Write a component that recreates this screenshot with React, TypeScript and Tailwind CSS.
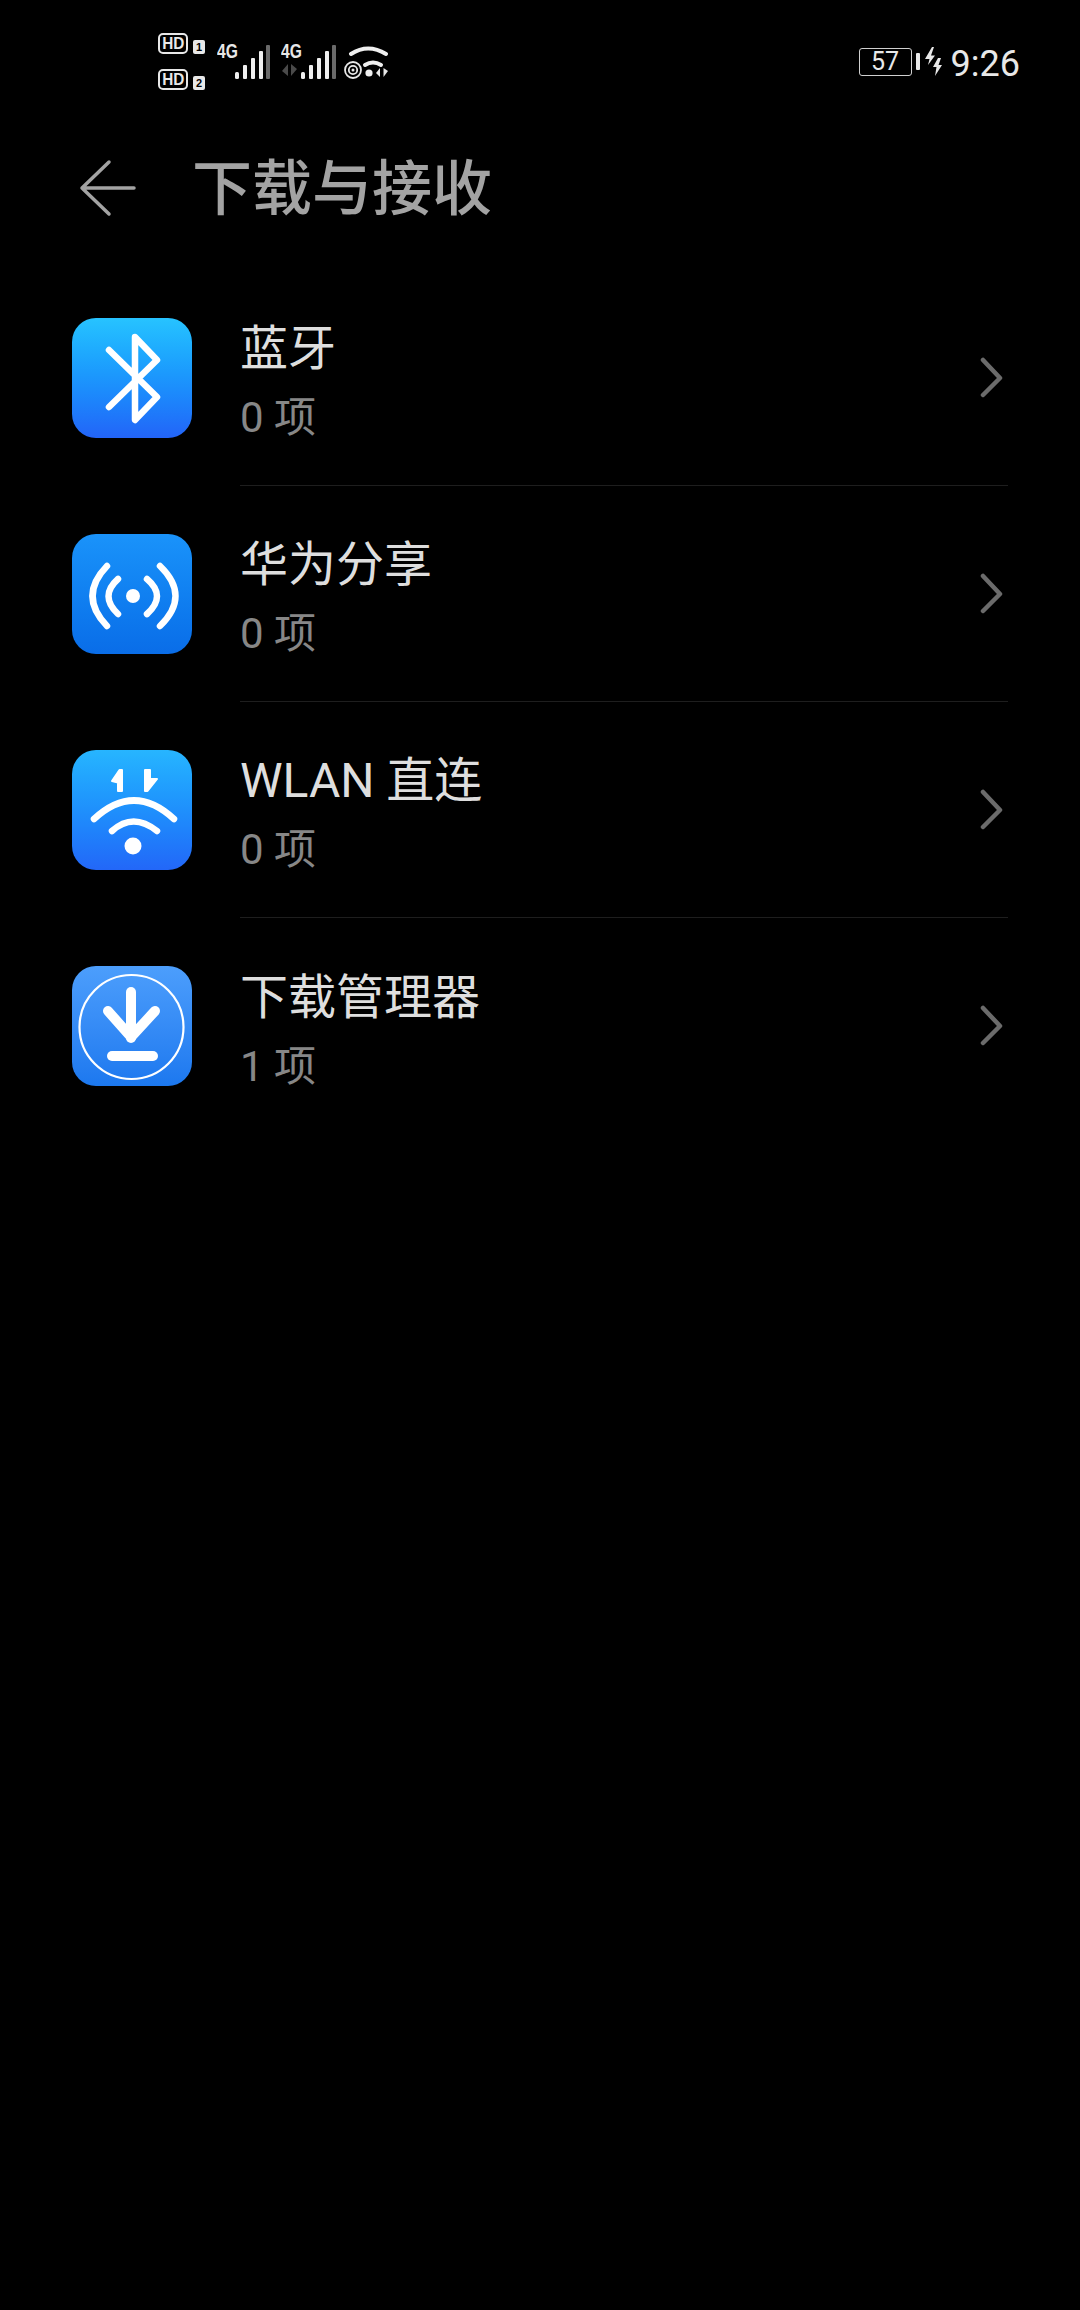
const font = "font-['Roboto','Noto_Sans_CJK_SC',sans-serif]";

function SignalBars() {
  return (
    <svg width="36" height="34" viewBox="0 0 36 34" className="block">
      <g fill="#efefef">
        <rect x="0" y="27" width="4" height="7" rx="1.5" />
        <rect x="8" y="20" width="4" height="14" rx="1" />
        <rect x="16" y="13" width="4" height="21" rx="1" />
        <rect x="24" y="6" width="4" height="28" rx="1" />
      </g>
      <rect x="31" y="0" width="4" height="34" rx="1" fill="#6a6a6a" />
    </svg>
  );
}

function HdBadge({ n }: { n: string }) {
  return (
    <div className="flex items-end gap-[5px]">
      <div className="flex h-[21px] w-[30px] items-center justify-center rounded-[5px] border-[2.5px] border-[#e8e8e8] font-['Liberation_Sans',sans-serif] text-[17px] leading-none font-bold text-[#e8e8e8]">
        <span className="scale-x-[0.9]">HD</span>
      </div>
      <div className="flex h-[14px] w-[12px] items-center justify-center rounded-[2px] bg-[#e8e8e8] font-['Liberation_Sans',sans-serif] text-[11px] leading-none font-bold text-black">
        {n}
      </div>
    </div>
  );
}

function FourG() {
  return (
    <div className="h-[15px] origin-left scale-x-[0.78] font-['Liberation_Sans',sans-serif] text-[20px] leading-[15px] font-bold text-[#e8e8e8]">
      4G
    </div>
  );
}

function Wifi() {
  return (
    <svg width="46" height="33" viewBox="0 0 46 33" fill="none" className="block">
      <path d="M7 8 Q24 -3 42 8" stroke="#efefef" strokeWidth="4" strokeLinecap="round" />
      <path d="M21 19 Q29 14 37 19" stroke="#efefef" strokeWidth="4" strokeLinecap="round" />
      <circle cx="9" cy="24" r="8" stroke="#e8e8e8" strokeWidth="1.8" />
      <circle cx="9" cy="24" r="4.2" stroke="#e8e8e8" strokeWidth="1.8" />
      <circle cx="9" cy="24" r="1.5" fill="#e8e8e8" />
      <circle cx="25" cy="27" r="3.6" fill="#efefef" />
      <path d="M36 22 V31 L32 27 Z" fill="#e8e8e8" />
      <path d="M39.5 22 V31 L44 25 Z" fill="#e8e8e8" />
    </svg>
  );
}

function StatusBar() {
  return (
    <div className="flex h-[122px] items-start pt-[33px] pr-[60px] pl-[158px]">
      <div className="flex h-[57px] w-full items-center">
        <div className="flex flex-col gap-[15px]">
          <HdBadge n="1" />
          <HdBadge n="2" />
        </div>
        <div className="ml-[12px] flex items-start">
          <div className="w-[18px]">
            <FourG />
          </div>
          <div className="mt-[1px]">
            <SignalBars />
          </div>
        </div>
        <div className="ml-[10px] flex items-start">
          <div className="flex w-[20px] flex-col gap-[5px]">
            <FourG />
            <svg width="18" height="12" viewBox="0 0 18 12" className="block">
              <path d="M7 0 V12 L1 7 Z M10 0 V12 L16 5 Z" fill="#4a4a4a" />
            </svg>
          </div>
          <div className="mt-[1px]">
            <SignalBars />
          </div>
        </div>
        <div className="mt-[2px] ml-[7px]">
          <Wifi />
        </div>
        <div className="ml-auto flex items-center">
          <div className="flex h-[28px] w-[53px] items-center justify-center rounded-[3px] border-[1.5px] border-[#d0d0d0] text-[25px] leading-none text-[#e8e8e8]">
            57
          </div>
          <div className="ml-[4px] h-[17px] w-[4px] rounded-[1px] bg-[#e8e8e8]" />
          <svg width="18" height="30" viewBox="0 0 18 30" className="ml-[5px] block">
            <path d="M7 0 L0 12 H4.5 L3 18 L10 8.5 H6 L9 0 Z M13 11 L8 20 H11.5 L10 29 L17 18 H13.5 L16 11 Z" fill="#e8e8e8" />
          </svg>
          <div className="mt-[5px] ml-[8px] text-[36px] leading-none text-[#e8e8e8]">9:26</div>
        </div>
      </div>
    </div>
  );
}

function IconBluetooth() {
  return (
    <div className="h-[120px] w-[120px] shrink-0 rounded-[24px] bg-linear-to-b from-[#27c3ff] to-[#2364f8]">
      <svg width="120" height="120" viewBox="0 0 120 120" fill="none" className="block">
        <path d="M37 32 L85 79 L63 102 V19 L85 42 L37 89" stroke="#fff" strokeWidth="6.5" strokeLinecap="round" strokeLinejoin="round" />
      </svg>
    </div>
  );
}

function IconShare() {
  return (
    <div className="h-[120px] w-[120px] shrink-0 rounded-[24px] bg-linear-to-b from-[#1a93fa] to-[#0a6de8]">
      <svg width="120" height="120" viewBox="0 0 120 120" fill="none" className="block">
        <circle cx="61" cy="62" r="7" fill="#fff" />
        <g stroke="#fff" strokeWidth="6.5" strokeLinecap="round">
          <path d="M46 45 Q27 62 46 80" />
          <path d="M35 32 Q6 62 35 92" />
          <path d="M75 45 Q95 62 75 80" />
          <path d="M88 32 Q119 62 88 92" />
        </g>
      </svg>
    </div>
  );
}

function IconWlan() {
  return (
    <div className="h-[120px] w-[120px] shrink-0 rounded-[24px] bg-linear-to-b from-[#27b5ff] to-[#2367f8]">
      <svg width="120" height="120" viewBox="0 0 120 120" fill="none" className="block">
        <circle cx="61" cy="96" r="8.5" fill="#fff" />
        <g stroke="#fff" strokeWidth="6.5" strokeLinecap="round">
          <path d="M40 81 Q61 62 85 81" />
          <path d="M22 69 Q62 32 102 69" />
        </g>
        <g fill="#fff" stroke="#fff" strokeWidth="2" strokeLinejoin="round">
          <path d="M50 20 H47.5 L40 31 L46 32.5 V41 H50 Z" />
          <path d="M73 20 H78 V29 H85 L75.5 41 H73 Z" />
        </g>
      </svg>
    </div>
  );
}

function IconDownload() {
  return (
    <div className="h-[120px] w-[120px] shrink-0 rounded-[24px] bg-linear-to-b from-[#4c9efc] to-[#1c78ef]">
      <svg width="120" height="120" viewBox="0 0 120 120" fill="none" className="block">
        <circle cx="59.5" cy="61" r="52" stroke="#fff" strokeWidth="2.2" />
        <g stroke="#fff" strokeWidth="10" strokeLinecap="round" strokeLinejoin="round">
          <path d="M59 26 V72" />
          <path d="M36 45 L59 71 L83 45" />
          <path d="M40 90 H81" />
        </g>
      </svg>
    </div>
  );
}

function Row({ icon, title, sub, divider }: { icon: React.ReactNode; title: string; sub: string; divider: boolean }) {
  return (
    <div className="flex h-[216px] items-center pr-[72px] pl-[72px]">
      {icon}
      <div className={`ml-[48px] flex h-[216px] flex-1 items-center ${divider ? "border-b border-[#1e1e1e]" : ""}`}>
        <div className="flex flex-1 flex-col pt-[8px]">
          <div className="h-[73px] text-[48px] leading-[60px] text-[#dedede]">{title}</div>
          <div className="text-[42px] leading-[52px] text-[#878787]">{sub}</div>
        </div>
        <svg width="24" height="42" viewBox="0 0 24 42" fill="none" className="mr-[4px] block">
          <path d="M3 3 L20 21 L3 38" stroke="#6b6b6b" strokeWidth="4.5" strokeLinecap="round" strokeLinejoin="round" />
        </svg>
      </div>
    </div>
  );
}

export default function App() {
  return (
    <div className={`h-[2310px] w-[1080px] overflow-hidden bg-black ${font}`}>
      <StatusBar />
      <div className="flex h-[132px] items-center pl-[78px]">
        <svg width="58" height="58" viewBox="0 0 58 58" fill="none" className="block">
          <path d="M31 3 L4 29 L31 55 M4 29 H56" stroke="#a3a3a3" strokeWidth="3.5" strokeLinecap="round" strokeLinejoin="round" />
        </svg>
        <div className="mt-[3px] ml-[56px] text-[60px] leading-none font-medium text-[#a3a3a3]">下载与接收</div>
      </div>
      <div className="mt-[16px]">
        <Row icon={<IconBluetooth />} title="蓝牙" sub="0 项" divider />
        <Row icon={<IconShare />} title="华为分享" sub="0 项" divider />
        <Row icon={<IconWlan />} title="WLAN 直连" sub="0 项" divider />
        <Row icon={<IconDownload />} title="下载管理器" sub="1 项" divider={false} />
      </div>
    </div>
  );
}
